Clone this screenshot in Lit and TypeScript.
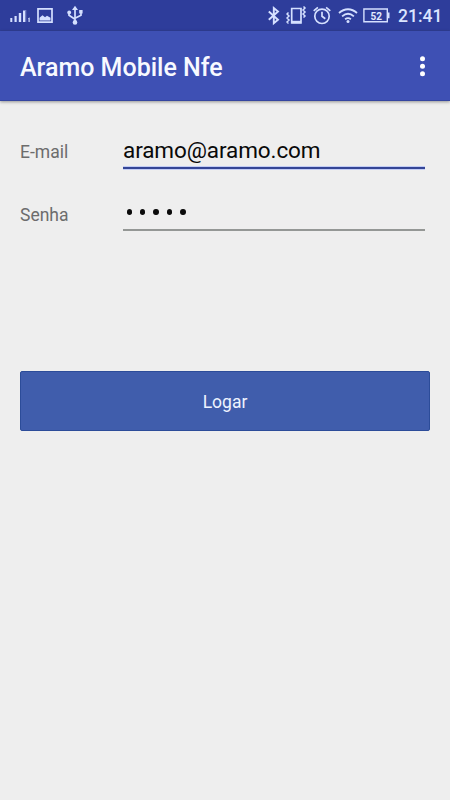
import { LitElement, html, css } from "lit";
import { customElement, property } from "lit/decorators.js";

@customElement("status-bar")
class StatusBar extends LitElement {
  static styles = css`
    :host { display: flex; justify-content: space-between; height: 31px; box-sizing: border-box; background: #2e3d9b; border-bottom: 1px solid #2f3e96; color: #dbe5ff; }
    .group { display: flex; height: 30px; }
    .left { padding-left: 10px; gap: 6px; }
    .right { padding-right: 7px; }
    svg { display: block; flex: none; height: 30px; fill: none; stroke: #d5e0ff; stroke-width: 1.7; }
    .solid { fill: #d5e0ff; stroke: none; }
    .dim { fill: #7380c5; stroke: none; }
    .usb { margin-left: 8px; }
    .vibrate { margin-left: 6px; }
    .alarm { margin-left: 6px; }
    .wifi { margin-left: 7px; }
    .battery { margin-left: 5px; }
    .level { font: 700 10px Roboto, sans-serif; fill: #e2eaff; stroke: none; }
    .clock { margin-left: 8px; width: 45px; font: 500 17.5px/33px Roboto, sans-serif; white-space: nowrap; }
  `;
  render() {
    return html`
      <div class="group left">
        <svg width="21" viewBox="0 0 21 30">
          <path class="solid" d="M.3 18h2v4h-2zM4.500 16h2.200v6H4.500zM8.800 13h2.400v9H8.800zM18 18.200l1.700-.7v4.500h-1.200v-3z" />
          <path class="solid" d="M13 10.500h2V22h-2z" /><path class="dim" d="M15 10h1.300v12H15z" />
        </svg>
        <svg width="16" viewBox="0 0 16 30">
          <path d="M1 8.900h14v13.300H1z" />
          <path class="solid" d="M2.500 20.500v-2.700l3-2.500 2.500 2 2-1.500 3.500 2v2.700z" />
        </svg>
        <svg class="usb" width="16" viewBox="0 0 16 30">
          <path d="M8 9v13M2 13v2.200l6 4M14 12v3.200l-6 3" />
          <path class="solid" d="M8 5.800l3 4.200H5zM12.200 10h3.400v3.400h-3.400z" />
          <circle class="solid" cx="2.200" cy="12.500" r="1.900" /><circle class="solid" cx="8" cy="22.400" r="2.300" />
        </svg>
      </div>
      <div class="group right">
        <svg width="12" viewBox="0 0 12 30">
          <path stroke-width="1.900" d="M.8 11.500l9.200 8.300-4.200 3.500V8L10 11.500l-9.200 8.300" />
        </svg>
        <svg class="vibrate" width="21" viewBox="0 0 21 30">
          <path d="M5.700 8.500h9.300v14.300H5.700z" /><path stroke-width="2.400" d="M5.700 22h9.300" />
          <path stroke-width="1.500" d="M2.500 12.500L1 14l2 2-2 2 2 2-2 2 1.500 1.500M17.500 6.500L19 8l-2 2 2 2-2 2 2 2-1.500 1.500" />
        </svg>
        <svg class="alarm" width="18" viewBox="0 0 18 30">
          <circle cx="9" cy="16.300" r="7.200" /><path d="M9 11.800v4.500l3.300 2.500M.7 10.800L4.900 7.300M17.300 10.800L13.100 7.300" />
        </svg>
        <svg class="wifi" width="20" viewBox="0 0 20 30">
          <path stroke-width="1.800" d="M1 13c5.500-5 12.500-5 18 0M4.100 16.400c3.700-3.300 8.100-3.300 11.800 0M7.100 19.200c1.900-1.500 3.900-1.500 5.800 0" />
          <circle class="solid" cx="10" cy="21.600" r="1.500" />
        </svg>
        <svg class="battery" width="27" viewBox="0 0 27 30">
          <path stroke-width="1.400" d="M.9 9h23.400v12.800H.9z" /><path class="solid" d="M25 12.500h1.500v5.800H25z" />
          <text class="level" x="13.300" y="19.500" text-anchor="middle">52</text>
        </svg>
        <div class="clock">21:41</div>
      </div>
    `;
  }
}

@customElement("form-row")
class FormRow extends LitElement {
  @property() label = "";
  @property() value = "";
  @property({ type: Boolean, reflect: true }) active = false;
  @property({ type: Boolean, reflect: true }) secret = false;
  static styles = css`
    :host { display: flex; height: 62px; padding: 0 25px 0 20px; font-family: Roboto, sans-serif; }
    .label { width: 103px; padding-top: 16px; box-sizing: border-box; font-size: 17.5px; line-height: 24px; color: #6c6c6c; }
    :host([secret]) .label { padding-top: 17px; }
    .field { flex: 1; height: 45px; box-sizing: border-box; border-bottom: 2px solid #949795; padding-top: 11px; font-size: 22.5px; line-height: 30px; letter-spacing: -0.1px; color: #090909; }
    :host([active]) .field { border-bottom: 2px solid #344596; box-shadow: 0 1px 0 #c3cdf5, inset 0 -1px 0 #c3cdf5; }
    .dots { display: flex; gap: 7.900px; padding: 12px 0 0 3.500px; }
    .dot { width: 5.500px; height: 6px; border-radius: 50%; background: #0b0b0b; }
  `;
  render() {
    return html`
      <div class="label">${this.label}</div>
      <div class="field">
        ${this.secret
          ? html`<div class="dots">${Array.from({ length: 5 }, () => html`<i class="dot"></i>`)}</div>`
          : this.value}
      </div>
    `;
  }
}

@customElement("app-root")
class AppRoot extends LitElement {
  static styles = css`
    :host { display: block; height: 800px; overflow: hidden; background: #eeeeee; font-family: Roboto, sans-serif; }
    .toolbar { display: flex; align-items: flex-start; justify-content: space-between; height: 70px; box-sizing: border-box; padding: 21px 25px 0 20px; background: #3e50b4; border-bottom: 1px solid #3546a0; box-shadow: 0 1px 3px rgba(0, 0, 0, 0.38); color: #f7f9ff; }
    .title { margin: 0; font-size: 25px; font-weight: 500; line-height: 32px; white-space: nowrap; }
    .more { display: block; width: 5px; height: 21px; margin-top: 4px; fill: #fff; }
    .form { padding-top: 23px; height: 247px; }
    .submit { display: block; width: 410px; height: 60px; margin: 0 20px; padding: 2px 0 0; border: 1px solid #2c4c99; border-radius: 2px; background: #405dac; color: #eef3ff; font: 17.5px Roboto, sans-serif; }
  `;
  render() {
    return html`
      <status-bar></status-bar>
      <header class="toolbar">
        <h1 class="title">Aramo Mobile Nfe</h1>
        <svg class="more" viewBox="0 0 5 21"><circle cx="2.500" cy="2.700" r="2.500" /><circle cx="2.500" cy="10.200" r="2.500" /><circle cx="2.500" cy="17.700" r="2.500" /></svg>
      </header>
      <main>
        <div class="form">
          <form-row label="E-mail" value="aramo@aramo.com" active></form-row>
          <form-row label="Senha" secret></form-row>
        </div>
        <button class="submit">Logar</button>
      </main>
    `;
  }
}
